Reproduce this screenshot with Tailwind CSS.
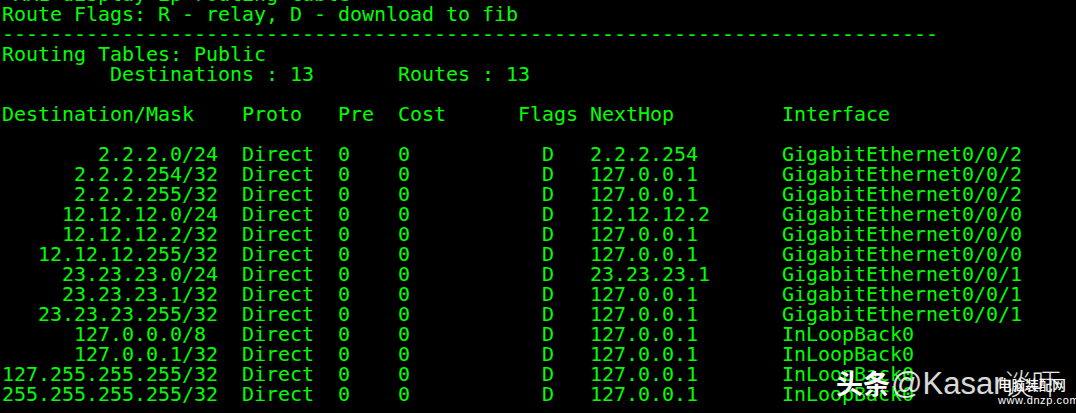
<!DOCTYPE html>
<html>
<head>
<script src="https://cdn.jsdelivr.net/npm/@tailwindcss/browser@4"></script>
</head>
<body class="m-0 bg-black">
<main class="relative w-[1076px] h-[413px] overflow-hidden bg-black">
<pre class="-mt-4 pl-[2px] font-['DejaVu_Sans_Mono',monospace] text-[20px] leading-[20px] tracking-[-0.04px] text-[#00ff00] whitespace-pre">&lt;AR1&gt;display ip routing-table
Route Flags: R - relay, D - download to fib
------------------------------------------------------------------------------
Routing Tables: Public
         Destinations : 13       Routes : 13

Destination/Mask    Proto   Pre  Cost      Flags NextHop         Interface

        2.2.2.0/24  Direct  0    0           D   2.2.2.254       GigabitEthernet0/0/2
      2.2.2.254/32  Direct  0    0           D   127.0.0.1       GigabitEthernet0/0/2
      2.2.2.255/32  Direct  0    0           D   127.0.0.1       GigabitEthernet0/0/2
     12.12.12.0/24  Direct  0    0           D   12.12.12.2      GigabitEthernet0/0/0
     12.12.12.2/32  Direct  0    0           D   127.0.0.1       GigabitEthernet0/0/0
   12.12.12.255/32  Direct  0    0           D   127.0.0.1       GigabitEthernet0/0/0
     23.23.23.0/24  Direct  0    0           D   23.23.23.1      GigabitEthernet0/0/1
     23.23.23.1/32  Direct  0    0           D   127.0.0.1       GigabitEthernet0/0/1
   23.23.23.255/32  Direct  0    0           D   127.0.0.1       GigabitEthernet0/0/1
      127.0.0.0/8   Direct  0    0           D   127.0.0.1       InLoopBack0
      127.0.0.1/32  Direct  0    0           D   127.0.0.1       InLoopBack0
127.255.255.255/32  Direct  0    0           D   127.0.0.1       InLoopBack0
255.255.255.255/32  Direct  0    0           D   127.0.0.1       InLoopBack0</pre>
<div class="absolute left-[836px] top-[367px] font-['Noto_Sans_CJK_SC',sans-serif] font-bold text-[27px] leading-[32px] text-white whitespace-nowrap">头条</div>
<div class="absolute left-[891px] top-[366px] font-['Liberation_Sans',sans-serif] text-[31px] leading-[36px] text-white/85 whitespace-nowrap">@Kasar</div>
<div class="absolute left-[1003px] top-[364px] font-['Noto_Sans_CJK_SC',sans-serif] font-light text-[29px] leading-[36px] text-white/90 whitespace-nowrap">谈吓</div>
<div class="absolute left-[998px] top-[374px] font-['Noto_Sans_CJK_SC',sans-serif] font-medium text-[13.6px] leading-[20px] text-white whitespace-nowrap">电脑装配网</div>
<div class="absolute left-[998px] top-[394px] font-['Liberation_Sans',sans-serif] text-[11px] leading-[13px] tracking-[0.6px] text-white whitespace-nowrap">www.dnzp.com</div>
</main>
</body>
</html>
